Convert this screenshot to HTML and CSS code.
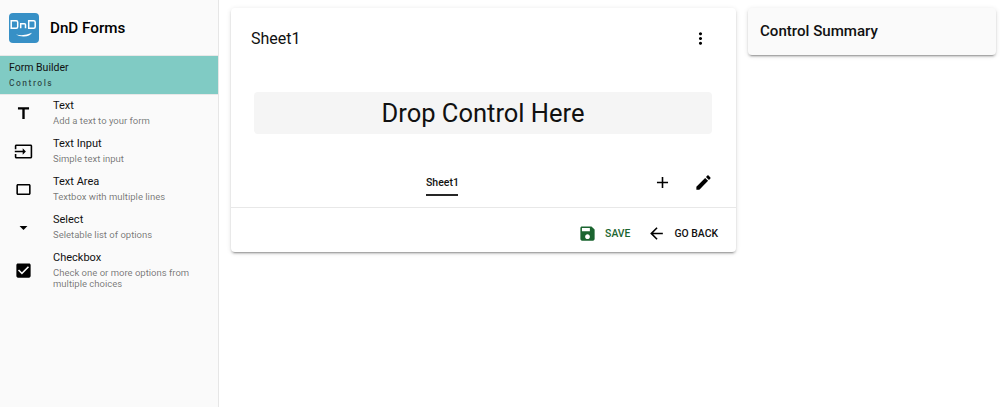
FILE: index.html
```html
<!doctype html>
<html>
<head>
  <title>DnD Forms</title>
  <meta charset="utf-8"/>
  <link rel="stylesheet" href="styles.css">
</head>
<body>
  <div class="App">
    <aside class="Sidebar">
      <div class="Sidebar__Brand">
        <svg class="Sidebar__Logo" viewBox="0 0 30 30">
          <rect width="30" height="30" rx="4" fill="#3790c6"/>
          <g fill="none" stroke="#fff" stroke-width="1.5">
            <path d="M2.2 7.7h5q1.5 0 1.5 1.5v4.6q0 1.5-1.5 1.5h-5z"/>
            <path d="M11.7 15.3v-4.6h3.8q1 0 1 1v3.6"/>
            <path d="M19.7 7.7h5q1.5 0 1.5 1.5v4.6q0 1.5-1.5 1.5h-5z"/>
          </g>
          <path d="M7 21.5q8 2 16-1.8q-2 3.6-8 3.9q-5 .2-8-2.1z" fill="#fff"/>
        </svg>
        <span class="Sidebar__Title">DnD Forms</span>
      </div>
      <div class="Sidebar__Band">
        <div class="Sidebar__BandTitle">Form Builder</div>
        <div class="Sidebar__BandSub">Controls</div>
      </div>
      <div class="Control">
        <div class="Control__Icon">
          <svg viewBox="0 0 24 24"><path d="M5 4v3h5.5v12h3V7H19V4z"/></svg>
        </div>
        <div class="Control__Body">
          <div class="Control__Name">Text</div>
          <div class="Control__Desc">Add a text to your form</div>
        </div>
      </div>
      <div class="Control">
        <div class="Control__Icon">
          <svg viewBox="0 0 24 24"><path d="M21 3.01H3c-1.1 0-2 .9-2 2V9h2V4.99h18v14.03H3V15H1v4.01c0 1.1.9 1.98 2 1.98h18c1.1 0 2-.88 2-1.98v-14c0-1.11-.9-2-2-2zM11 16l4-4-4-4v3H1v2h10v3z"/></svg>
        </div>
        <div class="Control__Body">
          <div class="Control__Name">Text Input</div>
          <div class="Control__Desc">Simple text input</div>
        </div>
      </div>
      <div class="Control">
        <div class="Control__Icon">
          <svg viewBox="0 0 24 24"><path d="M19 5H5c-1.1 0-2 .9-2 2v10c0 1.1.9 2 2 2h14c1.1 0 2-.9 2-2V7c0-1.1-.9-2-2-2zm0 12H5V7h14v10z"/></svg>
        </div>
        <div class="Control__Body">
          <div class="Control__Name">Text Area</div>
          <div class="Control__Desc">Textbox with multiple lines</div>
        </div>
      </div>
      <div class="Control">
        <div class="Control__Icon">
          <svg viewBox="0 0 24 24"><path d="M7 10l5 5 5-5z"/></svg>
        </div>
        <div class="Control__Body">
          <div class="Control__Name">Select</div>
          <div class="Control__Desc">Seletable list of options</div>
        </div>
      </div>
      <div class="Control">
        <div class="Control__Icon">
          <svg viewBox="0 0 24 24"><path d="M19 3H5c-1.11 0-2 .9-2 2v14c0 1.1.89 2 2 2h14c1.11 0 2-.9 2-2V5c0-1.1-.89-2-2-2zm-9 14l-5-5 1.41-1.41L10 14.17l7.59-7.59L19 8l-9 9z"/></svg>
        </div>
        <div class="Control__Body">
          <div class="Control__Name">Checkbox</div>
          <div class="Control__Desc">Check one or more options from multiple choices</div>
        </div>
      </div>
    </aside>

    <main class="Sheet">
      <div class="Sheet__Header">
        <span class="Sheet__Title">Sheet1</span>
        <svg class="Icon" viewBox="0 0 24 24"><path d="M12 8c1.1 0 2-.9 2-2s-.9-2-2-2-2 .9-2 2 .9 2 2 2zm0 2c-1.1 0-2 .9-2 2s.9 2 2 2 2-.9 2-2-.9-2-2-2zm0 6c-1.1 0-2 .9-2 2s.9 2 2 2 2-.9 2-2-.9-2-2-2z"/></svg>
      </div>
      <div class="Sheet__Drop">Drop Control Here</div>
      <div class="Sheet__Tabs">
        <div class="Sheet__Tab">Sheet1</div>
        <div class="Sheet__TabActions">
          <svg class="Icon" viewBox="0 0 24 24"><path d="M19 13h-6v6h-2v-6H5v-2h6V5h2v6h6v2z"/></svg>
          <svg class="Icon" viewBox="0 0 24 24"><path d="M3 17.25V21h3.75L17.81 9.94l-3.75-3.75L3 17.25zM20.71 7.04c.39-.39.39-1.02 0-1.41l-2.34-2.34c-.39-.39-1.02-.39-1.41 0l-1.83 1.83 3.75 3.75 1.83-1.83z"/></svg>
        </div>
      </div>
      <div class="Sheet__Footer">
        <div class="Action Action--save">
          <svg class="Icon" viewBox="0 0 24 24"><path d="M17 3H5c-1.11 0-2 .9-2 2v14c0 1.1.89 2 2 2h14c1.1 0 2-.9 2-2V7l-4-4zm-5 16c-1.66 0-3-1.34-3-3s1.34-3 3-3 3 1.34 3 3-1.34 3-3 3zm3-10H5V5h10v4z"/></svg>
          <span>Save</span>
        </div>
        <div class="Action">
          <svg class="Icon" viewBox="0 0 24 24"><path d="M20 11H7.83l5.59-5.59L12 4l-8 8 8 8 1.41-1.41L7.83 13H20v-2z"/></svg>
          <span>Go Back</span>
        </div>
      </div>
    </main>

    <section class="Summary">Control Summary</section>
  </div>
</body>
</html>
```

FILE: styles.css
```css
html, body {
  height: 100%;
  margin: 0;
}
body {
  background-color: #fff;
  color: #111;
  font-family: Roboto, "Liberation Sans", sans-serif;
  overflow: hidden;
}

.App {
  align-items: flex-start;
  display: flex;
  height: 100%;
}

.Sidebar {
  align-self: stretch;
  background-color: #fafafa;
  border-right: 1px solid #e6e6e6;
  flex: none;
  width: 218px;
}
.Sidebar__Brand {
  align-items: center;
  border-bottom: 1px solid #e8e8e8;
  display: flex;
  height: 55px;
  padding-left: 9px;
}
.Sidebar__Logo {
  height: 30px;
  margin-right: 11px;
  width: 30px;
}
.Sidebar__Title {
  color: #000;
  font-size: 15.2px;
  font-weight: 500;
}
.Sidebar__Band {
  background-color: #80cbc4;
  border-bottom: 1px solid #e8e8e8;
  box-sizing: border-box;
  height: 39px;
  padding: 5px 9px 0;
}
.Sidebar__BandTitle {
  color: #111;
  font-size: 10.5px;
  line-height: 14px;
}
.Sidebar__BandSub {
  color: rgba(0, 0, 0, .65);
  font-size: 8.5px;
  font-weight: 500;
  letter-spacing: 1.5px;
  line-height: 14px;
  margin-top: 1px;
}

.Control {
  display: flex;
  min-height: 38px;
}
.Control__Icon {
  align-items: center;
  box-sizing: border-box;
  display: flex;
  flex: none;
  justify-content: center;
  padding-bottom: 1px;
  width: 47px;
}
.Control__Icon svg {
  height: 19px;
  width: 19px;
}
.Control__Body {
  padding: 4px 24px 5px 6px;
}
.Control__Name {
  color: #111;
  font-size: 11px;
  line-height: 14px;
}
.Control__Desc {
  color: rgba(0, 0, 0, .54);
  font-size: 9.5px;
  line-height: 11px;
  margin-top: 2px;
}

.Icon {
  display: block;
  height: 19px;
  width: 19px;
}

.Sheet {
  background-color: #fff;
  border-radius: 4px;
  box-shadow: 0 3px 1px -2px rgba(0,0,0,.2), 0 2px 2px 0 rgba(0,0,0,.14), 0 1px 5px 0 rgba(0,0,0,.12);
  flex: none;
  margin: 8px 0 0 12px;
  width: 505px;
}
.Sheet__Header {
  align-items: center;
  display: flex;
  height: 60px;
  justify-content: space-between;
  padding: 0 26px 0 20px;
}
.Sheet__Title {
  font-size: 16px;
}
.Sheet__Drop {
  background-color: #f5f5f5;
  border-radius: 4px;
  font-size: 25.5px;
  height: 42px;
  line-height: 42px;
  margin: 24px 24px 0 23px;
  text-align: center;
}
.Sheet__Tabs {
  align-items: flex-end;
  border-bottom: 1px solid #e8e8e8;
  box-sizing: border-box;
  display: flex;
  height: 74px;
  justify-content: space-between;
  padding: 0 23px 11px 195px;
}
.Sheet__Tab {
  border-bottom: 2px solid #262626;
  font-size: 10.5px;
  font-weight: 500;
  line-height: 14px;
  padding: 0 0 4px;
  text-align: center;
  width: 32px;
}
.Sheet__TabActions {
  display: flex;
  gap: 22px;
  margin-bottom: 4px;
}
.Sheet__Footer {
  align-items: center;
  box-sizing: border-box;
  display: flex;
  gap: 17px;
  height: 44px;
  justify-content: flex-end;
  padding: 6px 18px 0 0;
}
.Action {
  align-items: center;
  display: flex;
  font-size: 10.4px;
  font-weight: 500;
  gap: 8px;
  text-transform: uppercase;
}
.Action--save {
  color: #1b6530;
}
.Action--save svg {
  fill: #1b6530;
}

.Summary {
  background-color: #fafafa;
  border-radius: 4px;
  box-shadow: 0 3px 1px -2px rgba(0,0,0,.2), 0 2px 2px 0 rgba(0,0,0,.14), 0 1px 5px 0 rgba(0,0,0,.12);
  box-sizing: border-box;
  flex: none;
  font-size: 15.1px;
  font-weight: 500;
  height: 47px;
  line-height: 47px;
  margin: 8px 0 0 12px;
  padding-left: 12px;
  width: 248px;
}
```
